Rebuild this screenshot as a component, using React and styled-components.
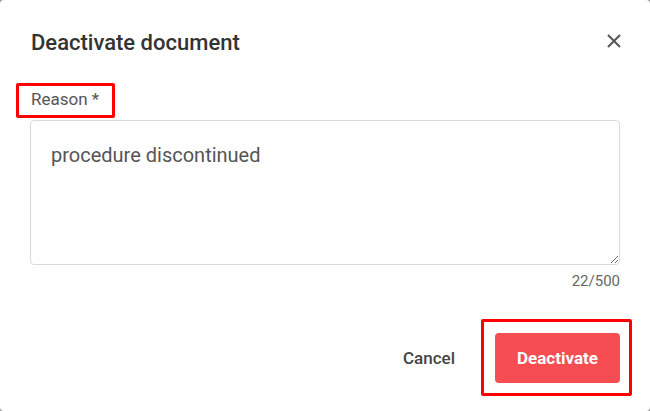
import styled, { createGlobalStyle } from 'styled-components';

const GlobalStyle = createGlobalStyle`
    html, body {
        margin: 0;
        padding: 0;
        background: #9a9a9a;
    }
    *, *::before, *::after {
        box-sizing: border-box;
    }
`;

const Dialog = styled.div`
    width: 650px;
    height: 411px;
    background: #fff;
    border-radius: 4px;
    padding: 30px 30px 0 30px;
    display: flex;
    flex-direction: column;
    font-family: Roboto, "Liberation Sans", sans-serif;
    overflow: hidden;
`;

const Header = styled.div`
    display: flex;
    justify-content: space-between;
    align-items: flex-start;
    padding-left: 1px;
`;

const Title = styled.h2`
    margin: 0;
    font-size: 22px;
    line-height: 26px;
    font-weight: 500;
    color: #333;
`;

const CloseButton = styled.button`
    border: none;
    background: none;
    padding: 0;
    margin: -1px -6px 0 0;
    width: 24px;
    height: 24px;
    display: flex;
    align-items: center;
    justify-content: center;
    color: #555;
    cursor: pointer;
`;

const Field = styled.div`
    margin-top: 33px;
    display: flex;
    flex-direction: column;
`;

const Highlight = styled.span`
    position: relative;
    align-self: flex-start;

    &::after {
        content: '';
        position: absolute;
        left: ${(p) => p.$left}px;
        top: ${(p) => p.$top}px;
        width: ${(p) => p.$width}px;
        height: ${(p) => p.$height}px;
        border: 3px solid #f00;
        border-radius: 2px;
        pointer-events: none;
    }
`;

const Label = styled.label`
    display: block;
    padding-left: 1px;
    font-size: 17px;
    line-height: 20px;
    color: #555;
`;

const TextArea = styled.textarea`
    margin-top: 11px;
    width: 100%;
    height: 145px;
    border: 1px solid #d9d9d9;
    border-radius: 4px;
    padding: 22px 20px;
    font-family: Roboto, "Liberation Sans", sans-serif;
    font-size: 20px;
    line-height: 24px;
    color: #555;
    resize: vertical;
    outline: none;
`;

const Counter = styled.div`
    margin-top: 7px;
    text-align: right;
    font-size: 15px;
    line-height: 18px;
    color: #666;
`;

const Footer = styled.div`
    margin-top: 43px;
    display: flex;
    justify-content: flex-end;
    align-items: center;
    gap: 40px;
`;

const TextButton = styled.button`
    border: none;
    background: none;
    padding: 0;
    font-family: inherit;
    font-size: 17px;
    font-weight: 500;
    color: #444;
    cursor: pointer;
`;

const DangerButton = styled.button`
    display: block;
    height: 50px;
    padding: 0 22px;
    border: none;
    border-radius: 4px;
    background: #f64d52;
    color: #fff;
    font-family: inherit;
    font-size: 17px;
    font-weight: 700;
    cursor: pointer;
`;

const App = () => {
    return (
        <>
            <GlobalStyle />
            <Dialog>
                <Header>
                    <Title>Deactivate document</Title>
                    <CloseButton aria-label="Close">
                        <svg width="16" height="16" viewBox="0 0 16 16">
                            <path
                                d="M2 2 L14 14 M14 2 L2 14"
                                stroke="currentColor"
                                strokeWidth="2"
                                fill="none"
                            />
                        </svg>
                    </CloseButton>
                </Header>
                <Field>
                    <Highlight $left={-14} $top={-6} $width={99} $height={35}>
                        <Label>Reason *</Label>
                    </Highlight>
                    <TextArea defaultValue="procedure discontinued" />
                    <Counter>22/500</Counter>
                </Field>
                <Footer>
                    <TextButton>Cancel</TextButton>
                    <Highlight $left={-14} $top={-14} $width={151} $height={77}>
                        <DangerButton>Deactivate</DangerButton>
                    </Highlight>
                </Footer>
            </Dialog>
        </>
    );
};

export default App;
